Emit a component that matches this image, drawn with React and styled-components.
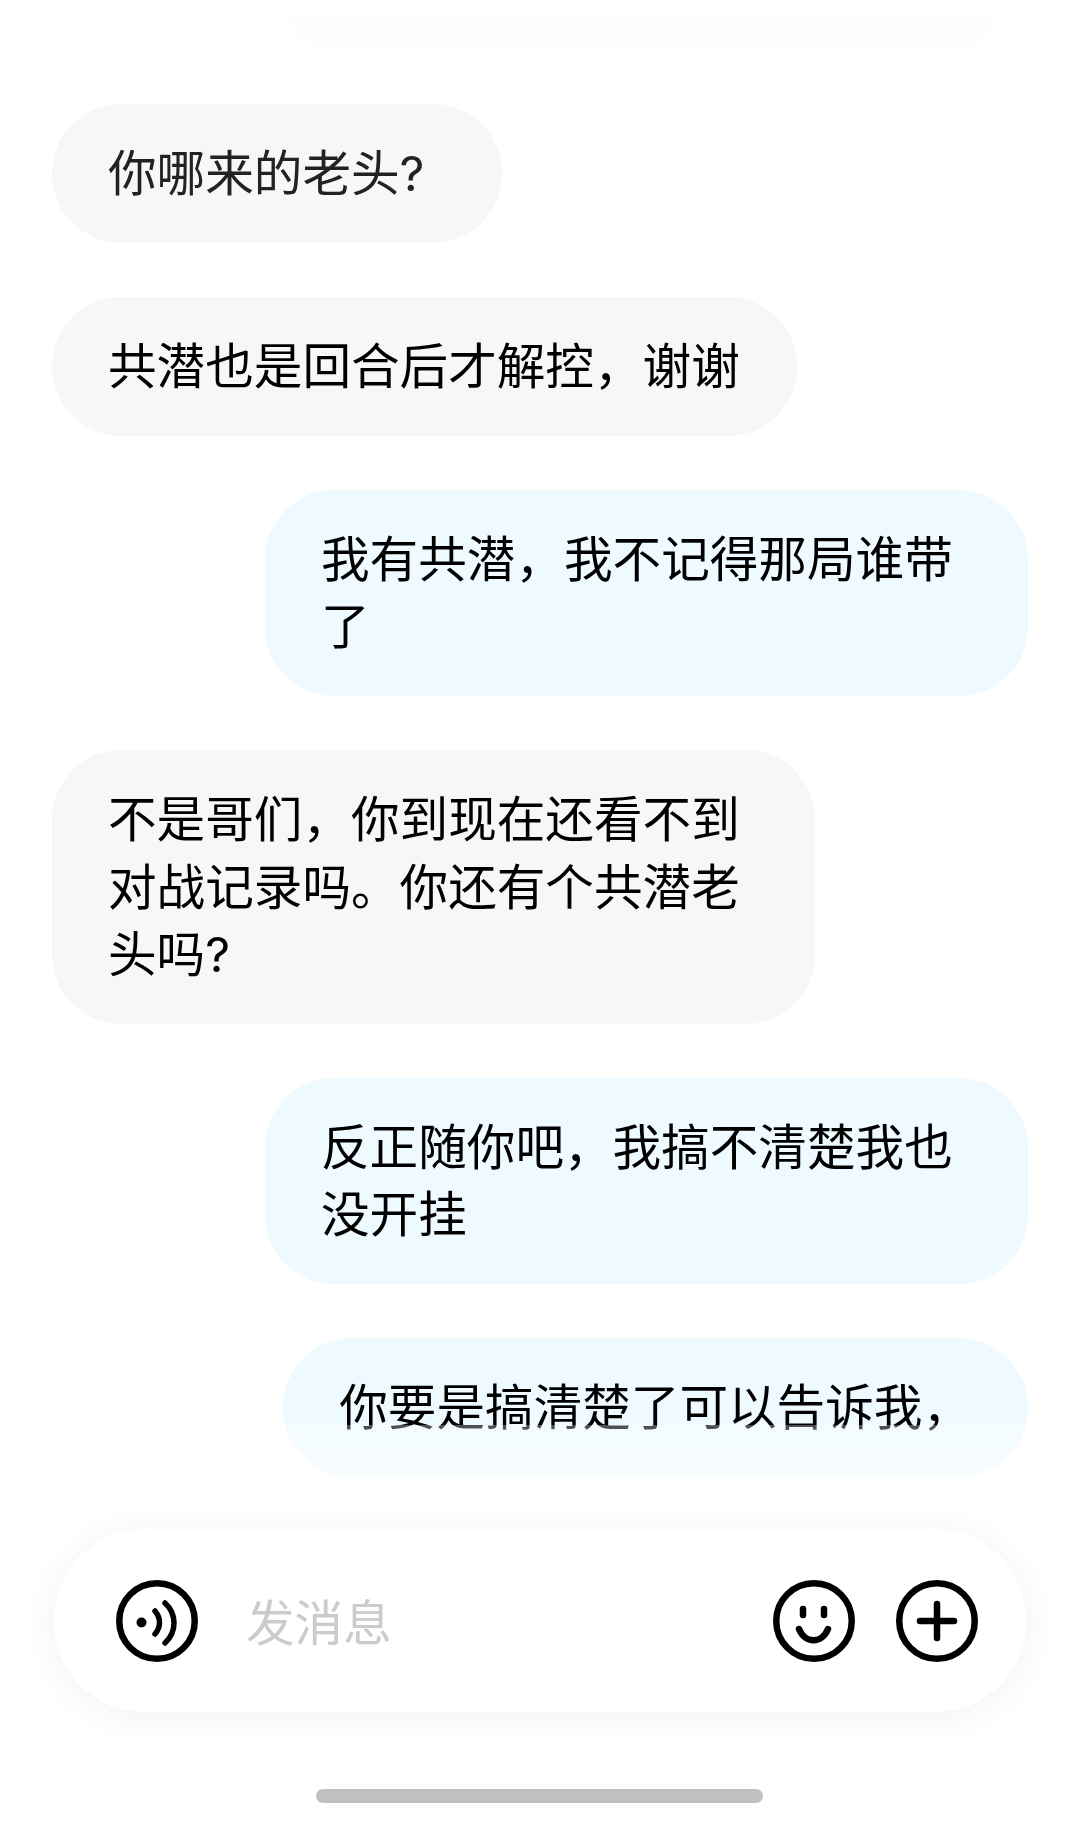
import React from 'react';
import styled, { createGlobalStyle } from 'styled-components';

const GlobalStyle = createGlobalStyle`
  html, body {
    margin: 0;
    padding: 0;
    background: #fff;
  }
  * {
    box-sizing: border-box;
  }
`;

const Page = styled.div`
  position: relative;
  width: 1080px;
  height: 1823px;
  overflow: hidden;
  display: flex;
  flex-direction: column;
  background: #fff;
  font-family: Inter, "Noto Sans CJK SC", "Noto Sans", sans-serif;
`;

const Thread = styled.div`
  height: 1529px;
  padding: 0 52px;
  display: flex;
  flex-direction: column;
  gap: 54.3px;
  overflow: hidden;
`;

const FadedTop = styled.div`
  align-self: flex-end;
  width: 716px;
  height: 50px;
  margin-right: 28px;
  border-radius: 0 0 60px 60px;
  background: linear-gradient(#fff, #fcfefe 40%);
`;

const Bubble = styled.div`
  align-self: ${props => (props.$mine ? 'flex-end' : 'flex-start')};
  max-width: 763px;
  padding: 36px ${props => props.$padRight || 57}px 35px 56px;
  border-radius: 69px;
  background: ${props => (props.$mine ? '#eefaff' : '#f7f7f7')};
  color: ${props => props.$color || '#000'};
  font-size: 48.6px;
  line-height: 67.5px;
`;

const BottomFade = styled.div`
  position: absolute;
  left: 0;
  right: 0;
  top: 1425px;
  height: 75px;
  background: linear-gradient(rgba(255, 255, 255, 0.3), rgba(255, 255, 255, 0.7));
  pointer-events: none;
`;

const InputBar = styled.div`
  position: relative;
  margin: 0 54px;
  height: 183px;
  padding: 0 48px 0 62px;
  display: flex;
  align-items: center;
  border-radius: 90px;
  background: #fff;
  box-shadow: 0 4px 36px rgba(0, 0, 0, 0.06);
`;

const Placeholder = styled.span`
  flex: 1;
  margin-left: 48px;
  padding-top: 6px;
  color: #cbcbcb;
  font-size: 48.6px;
  line-height: 67.5px;
`;

const Actions = styled.div`
  display: flex;
  gap: 41px;
`;

const IconSvg = styled.svg.attrs({ viewBox: '0 0 82 82', width: 82, height: 82 })`
  display: block;
  flex: none;
  fill: none;
  stroke: #000;
  stroke-width: 6.5;
  stroke-linecap: round;
`;

const Wave = styled.path`
  stroke-width: 5.5;
`;

const HomeBar = styled.div`
  width: 447px;
  height: 14px;
  margin: 77px 0 0 316px;
  border-radius: 7px;
  background: #c0c0c0;
`;

const VoiceIcon = () => (
  <IconSvg>
    <circle cx="41" cy="41" r="37.75" />
    <circle cx="25.5" cy="42.5" r="5" fill="#000" stroke="none" />
    <Wave d="M39 31 C45 38 45 47 39 54" />
    <Wave d="M49 23 C61 34 61 52 49 63" />
  </IconSvg>
);

const SmileIcon = () => (
  <IconSvg>
    <circle cx="41" cy="41" r="37.75" />
    <path d="M30 29 V35" />
    <path d="M51 29 V35" />
    <path d="M26 49 C32 64 49 64 55 49" />
  </IconSvg>
);

const PlusIcon = () => (
  <IconSvg>
    <circle cx="41" cy="41" r="37.75" />
    <path d="M24 41 H58" />
    <path d="M41 24 V58" />
  </IconSvg>
);

const messages = [
  { text: '你哪来的老头?', color: '#222', padRight: 78 },
  { text: '共潜也是回合后才解控，谢谢' },
  { text: '我有共潜，我不记得那局谁带了', mine: true },
  { text: '不是哥们，你到现在还看不到对战记录吗。你还有个共潜老头吗?' },
  { text: '反正随你吧，我搞不清楚我也没开挂', mine: true },
  { text: '你要是搞清楚了可以告诉我，', mine: true },
];

export default function App() {
  return (
    <Page>
      <GlobalStyle />
      <Thread>
        <FadedTop />
        {messages.map(message => (
          <Bubble
            key={message.text}
            $mine={message.mine}
            $color={message.color}
            $padRight={message.padRight}
          >
            {message.text}
          </Bubble>
        ))}
      </Thread>
      <BottomFade />
      <InputBar>
        <VoiceIcon />
        <Placeholder>发消息</Placeholder>
        <Actions>
          <SmileIcon />
          <PlusIcon />
        </Actions>
      </InputBar>
      <HomeBar />
    </Page>
  );
}
